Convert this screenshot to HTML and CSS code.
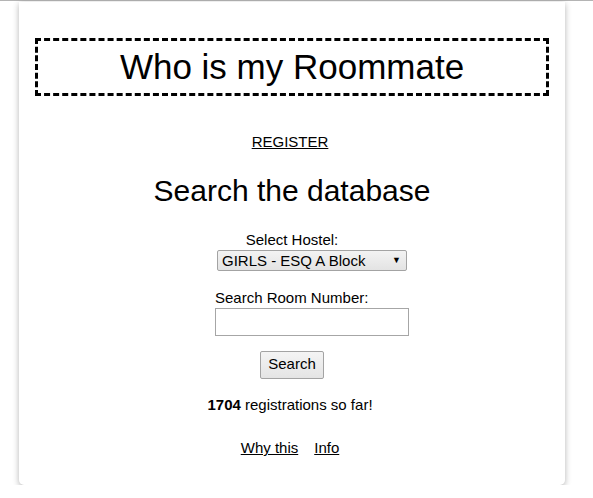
FILE: index.html
```html
<!DOCTYPE html>
<html>
<head>
<meta charset="utf-8">
<link rel="stylesheet" href="styles.css">
</head>
<body>
<div class="topline"></div>
<div class="card">
  <h1 class="title">Who is my Roommate</h1>
  <p class="register"><a href="#">REGISTER</a></p>
  <h2 class="heading">Search the database</h2>
  <form class="search">
    <div class="field hostel">
      <label class="lbl">Select Hostel:</label>
      <div class="select">GIRLS - ESQ A Block<span class="arrow">▼</span></div>
    </div>
    <div class="field room">
      <label class="lbl">Search Room Number:</label>
      <input class="input" type="text">
    </div>
    <button class="btn" type="button">Search</button>
  </form>
  <p class="count"><b>1704</b> registrations so far!</p>
  <p class="links"><a href="#">Why this</a><a href="#">Info</a></p>
</div>
</body>
</html>
```
FILE: styles.css
```css
html, body { margin: 0; padding: 0; background: #fff; }
body { font-family: "Liberation Sans", Arial, sans-serif; font-size: 15px; color: #000; }
.topline { border-top: 1px solid #b4b4b4; }
.card {
  margin: 1px 28px 0 19px;
  padding: 36px 16px 29px;
  background: #fff;
  border-radius: 0 0 5px 5px;
  box-shadow: 0 2px 6px rgba(0,0,0,0.3);
  text-align: center;
}
.title {
  margin: 0;
  border: 3px dashed #000;
  padding: 5px 0;
  font-size: 35px;
  line-height: 42px;
  font-weight: normal;
}
.register { margin: 37px 4px 0 0; line-height: 17px; }
a { color: #000; }
.heading { margin: 24px 0 0; font-size: 30px; line-height: 34px; font-weight: normal; }
.search { margin-top: 23px; }
.lbl { display: block; line-height: 17px; }
.hostel { display: flex; flex-direction: column; align-items: center; }
.select {
  margin: 2px 0 0 40px;
  height: 19px;
  border: 1px solid #a3a3a3;
  border-radius: 2px;
  background: linear-gradient(#f3f3f3, #e3e3e3);
  text-align: left;
  padding-left: 4px;
  box-sizing: content-box;
  width: 184px;
  line-height: 20px;
  position: relative;
}
.arrow { position: absolute; right: 5px; top: 0; font-size: 9px; line-height: 18px; }
.room { display: inline-block; margin: 18px 0 0 40px; text-align: left; }
.input {
  display: block;
  margin: 2px 0 0;
  width: 194px;
  height: 28px;
  box-sizing: border-box;
  border: 1px solid #a6a6a6;
  border-radius: 0;
  padding: 0 3px;
  font: inherit;
}
.btn {
  display: block;
  margin: 15px auto 0;
  width: 64px;
  height: 28px;
  border: 1px solid #a3a3a3;
  border-radius: 2px;
  background: linear-gradient(#f4f4f4, #e4e4e4);
  font: inherit;
  line-height: 24px;
  color: #000;
  padding: 0 0 2px;
}
.count { margin: 17px 4px 0 0; line-height: 17px; }
.links { margin: 26px 4px 0 0; line-height: 17px; display: flex; justify-content: center; gap: 16px; }
```
